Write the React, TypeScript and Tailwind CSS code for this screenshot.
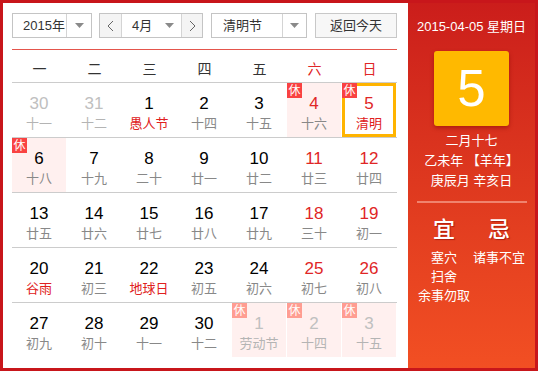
const FONT = { fontFamily: '"Liberation Sans", Arial, "Noto Sans CJK SC", sans-serif' };

type Day = {
  d: number;
  lunar: string;
  faded?: boolean;
  weekend?: boolean;
  red?: boolean;
  rest?: boolean;
  today?: boolean;
};

const rows: Day[][] = [
  [
    { d: 30, lunar: '十一', faded: true },
    { d: 31, lunar: '十二', faded: true },
    { d: 1, lunar: '愚人节', red: true },
    { d: 2, lunar: '十四' },
    { d: 3, lunar: '十五' },
    { d: 4, lunar: '十六', weekend: true, rest: true },
    { d: 5, lunar: '清明', weekend: true, rest: true, red: true, today: true },
  ],
  [
    { d: 6, lunar: '十八', rest: true },
    { d: 7, lunar: '十九' },
    { d: 8, lunar: '二十' },
    { d: 9, lunar: '廿一' },
    { d: 10, lunar: '廿二' },
    { d: 11, lunar: '廿三', weekend: true },
    { d: 12, lunar: '廿四', weekend: true },
  ],
  [
    { d: 13, lunar: '廿五' },
    { d: 14, lunar: '廿六' },
    { d: 15, lunar: '廿七' },
    { d: 16, lunar: '廿八' },
    { d: 17, lunar: '廿九' },
    { d: 18, lunar: '三十', weekend: true },
    { d: 19, lunar: '初一', weekend: true },
  ],
  [
    { d: 20, lunar: '谷雨', red: true },
    { d: 21, lunar: '初三' },
    { d: 22, lunar: '地球日', red: true },
    { d: 23, lunar: '初五' },
    { d: 24, lunar: '初六' },
    { d: 25, lunar: '初七', weekend: true },
    { d: 26, lunar: '初八', weekend: true },
  ],
  [
    { d: 27, lunar: '初九' },
    { d: 28, lunar: '初十' },
    { d: 29, lunar: '十一' },
    { d: 30, lunar: '十二' },
    { d: 1, lunar: '劳动节', faded: true, rest: true },
    { d: 2, lunar: '十四', faded: true, rest: true },
    { d: 3, lunar: '十五', faded: true, rest: true },
  ],
];

const weekdays = ['一', '二', '三', '四', '五', '六', '日'];

function Caret() {
  return (
    <svg width="9" height="5" viewBox="0 0 9 5">
      <path d="M0 0 H9 L4.5 5 Z" fill="#8a8a8a" />
    </svg>
  );
}

function Chevron({ dir }: { dir: 'l' | 'r' }) {
  return (
    <svg width="7" height="12" viewBox="0 0 7 12">
      <polyline
        points={dir === 'l' ? '6,1 1,6 6,11' : '1,1 6,6 1,11'}
        fill="none"
        stroke="#666"
        strokeWidth="1"
      />
    </svg>
  );
}

function Cell({ day }: { day: Day }) {
  let numColor = 'text-black';
  if (day.faded) numColor = 'text-[#c0c0c0]';
  else if (day.weekend) numColor = 'text-[#e02626]';
  let lunarColor = 'text-[#888]';
  if (day.faded) lunarColor = 'text-[#b4b4b4]';
  else if (day.red) lunarColor = 'text-[#e02020]';

  const bg = day.today ? 'bg-white' : day.rest ? 'bg-[#fff0ef]' : '';
  const border = day.today ? 'border-[3px] border-[#ffb400] pt-[8px]' : 'pt-[11px]';

  return (
    <div className="w-[55px] h-[54px] pr-px">
      <div className={`relative h-full w-full flex flex-col items-center ${bg} ${border}`}>
        {day.rest && (
          <div
            className={`absolute ${day.today ? '-top-[3px] -left-[3px]' : 'top-0 left-0'} w-[15px] h-[15px] flex items-center justify-center text-white text-[12px] leading-none ${
              day.faded ? 'bg-[#ff9d92]' : 'bg-[#f94242]'
            }`}
          >
            休
          </div>
        )}
        <div className={`text-[17px] leading-[20px] ${numColor}`}>{day.d}</div>
        <div className={`text-[13px] leading-[16px] mt-[2px] ${lunarColor}`}>{day.lunar}</div>
      </div>
    </div>
  );
}

export default function App() {
  return (
    <div style={FONT} className="w-[538px] h-[371px] border-[3px] border-[#c8161b] flex bg-white overflow-hidden">
      {/* left: month grid */}
      <div className="w-[405px] pl-[9px] pr-[11px] pt-[10px]">
        <div className="flex h-[25px] text-[13px] text-[#333] whitespace-nowrap">
          <div className="w-[80px] flex border border-[#c4c4c4] bg-white">
            <div className="flex-1 flex items-center pl-[10px]">2015年</div>
            <div className="w-[25px] border-l border-[#d4d4d4] flex items-center justify-center">
              <Caret />
            </div>
          </div>
          <div className="ml-[7px] w-[104px] flex border border-[#c4c4c4]">
            <div className="w-[22px] bg-[#f4f4f4] border-r border-[#d4d4d4] flex items-center justify-center">
              <Chevron dir="l" />
            </div>
            <div className="flex-1 flex items-center bg-white">
              <span className="pl-[10px] flex-1">4月</span>
              <span className="pr-[7px] flex items-center">
                <Caret />
              </span>
            </div>
            <div className="w-[21px] bg-[#f4f4f4] border-l border-[#d4d4d4] flex items-center justify-center">
              <Chevron dir="r" />
            </div>
          </div>
          <div className="ml-[8px] w-[96px] flex border border-[#c4c4c4] bg-white">
            <div className="flex-1 flex items-center pl-[11px]">清明节</div>
            <div className="w-[24px] border-l border-[#d4d4d4] flex items-center justify-center">
              <Caret />
            </div>
          </div>
          <div className="ml-[8px] flex-1 border border-[#c8c8c8] bg-[#f7f7f7] flex items-center justify-center">
            返回今天
          </div>
        </div>

        <div className="mt-[11px] border-t border-[#e4554c]">
          <div className="grid grid-cols-7 h-[33px] border-b border-[#cccccc] text-[14px]">
            {weekdays.map((w, i) => (
              <div key={w} className={`text-center pt-[9px] leading-[20px] ${i > 4 ? 'text-[#e02626]' : 'text-[#333]'}`}>
                {w}
              </div>
            ))}
          </div>
          {rows.map((row, ri) => (
            <div key={ri} className={`flex ${ri < rows.length - 1 ? 'border-b border-[#cccccc]' : ''}`}>
              {row.map((day, di) => (
                <Cell key={di} day={day} />
              ))}
            </div>
          ))}
        </div>
      </div>

      {/* right: today panel */}
      <div className="flex-1 bg-gradient-to-b from-[#cb1d1b] to-[#f24f23] text-white flex flex-col items-center">
        <div className="pt-[15px] text-[13px] leading-[18px]">2015-04-05 星期日</div>
        <div className="mt-[15px] w-[75px] h-[75px] rounded-[3px] bg-[#ffb900] shadow-[0_2px_4px_rgba(120,0,0,0.45)] flex items-center justify-center text-[51px] leading-none">
          5
        </div>
        <div className="mt-[5px] text-[13px] leading-[20px] text-center whitespace-nowrap">
          <div>二月十七</div>
          <div>乙未年 【羊年】</div>
          <div>庚辰月 辛亥日</div>
        </div>
        <div className="mt-[10px] w-[110px] h-[2px] bg-[#f0836e]" />
        <div className="w-[110px] flex mt-[14px]">
          <div className="w-1/2 flex flex-col items-center">
            <div className="text-[22px] leading-[26px] font-medium [text-shadow:1px_1px_1px_rgba(120,0,0,0.5)]">宜</div>
            <div className="mt-[5px] text-[13px] leading-[19px] text-center whitespace-nowrap">
              <div>塞穴</div>
              <div>扫舍</div>
              <div>余事勿取</div>
            </div>
          </div>
          <div className="w-1/2 flex flex-col items-center">
            <div className="text-[22px] leading-[26px] font-medium [text-shadow:1px_1px_1px_rgba(120,0,0,0.5)]">忌</div>
            <div className="mt-[5px] text-[13px] leading-[19px] text-center whitespace-nowrap">
              <div>诸事不宜</div>
            </div>
          </div>
        </div>
      </div>
    </div>
  );
}
